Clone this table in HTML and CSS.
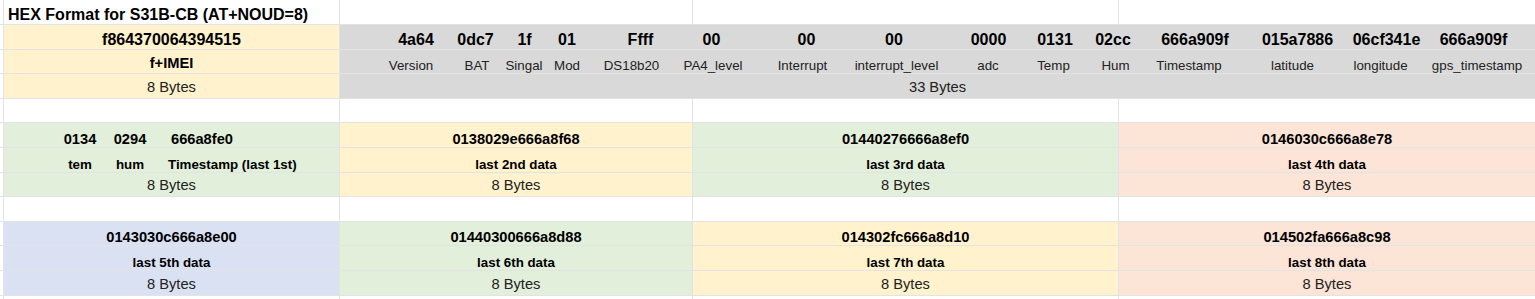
FILE: index.html
```html
<!DOCTYPE html>
<html lang="en">
<head>
<meta charset="utf-8">
<title>HEX Format for S31B-CB</title>
<link rel="stylesheet" href="styles.css">
</head>
<body>
<div class="sheet">
  <div class="c stub"></div>
  <div class="c title">HEX Format for S31B-CB (AT+NOUD=8)</div>
  <div class="c"></div>
  <div class="c"></div>
  <div class="c end"></div>

  <div class="c stub"></div>
  <div class="c yellow big">f864370064394515</div>
  <div class="c gray span3 fields-cell vals-cell">
    <div class="fields vals">
      <span>4a64</span><span>0dc7</span><span>1f</span><span>01</span><span>Ffff</span><span>00</span><span>00</span><span>00</span><span>0000</span><span>0131</span><span>02cc</span><span>666a909f</span><span>015a7886</span><span>06cf341e</span><span>666a909f</span>
    </div>
  </div>

  <div class="c stub"></div>
  <div class="c yellow mid imei">f+IMEI</div>
  <div class="c gray span3 fields-cell names-cell">
    <div class="fields names">
      <span>Version</span><span>BAT</span><span>Singal</span><span>Mod</span><span>DS18b20</span><span>PA4_level</span><span>Interrupt</span><span>interrupt_level</span><span>adc</span><span>Temp</span><span>Hum</span><span>Timestamp</span><span>latitude</span><span>longitude</span><span>gps_timestamp</span>
    </div>
  </div>

  <div class="c stub"></div>
  <div class="c yellow bytes">8 Bytes</div>
  <div class="c gray span3 bytes">33 Bytes</div>

  <div class="c stub"></div>
  <div class="c"></div>
  <div class="c"></div>
  <div class="c"></div>
  <div class="c end"></div>

  <div class="c stub"></div>
  <div class="c green split">
    <div class="sub mid">
      <span>0134</span><span>0294</span><span class="ts">666a8fe0</span>
    </div>
  </div>
  <div class="c yellow mid">0138029e666a8f68</div>
  <div class="c green mid">01440276666a8ef0</div>
  <div class="c peach mid end">0146030c666a8e78</div>

  <div class="c stub"></div>
  <div class="c green split">
    <div class="sub name">
      <span>tem</span><span>hum</span><span class="ts ts-name">Timestamp (last 1st)</span>
    </div>
  </div>
  <div class="c yellow name">last 2nd data</div>
  <div class="c green name">last 3rd data</div>
  <div class="c peach name end">last 4th data</div>

  <div class="c stub"></div>
  <div class="c green bytes">8 Bytes</div>
  <div class="c yellow bytes">8 Bytes</div>
  <div class="c green bytes">8 Bytes</div>
  <div class="c peach bytes end">8 Bytes</div>

  <div class="c stub"></div>
  <div class="c"></div>
  <div class="c"></div>
  <div class="c"></div>
  <div class="c end"></div>

  <div class="c stub"></div>
  <div class="c blue mid">0143030c666a8e00</div>
  <div class="c green mid">01440300666a8d88</div>
  <div class="c yellow mid">014302fc666a8d10</div>
  <div class="c peach mid end">014502fa666a8c98</div>

  <div class="c stub"></div>
  <div class="c blue name">last 5th data</div>
  <div class="c green name">last 6th data</div>
  <div class="c yellow name">last 7th data</div>
  <div class="c peach name end">last 8th data</div>

  <div class="c stub"></div>
  <div class="c blue bytes">8 Bytes</div>
  <div class="c green bytes">8 Bytes</div>
  <div class="c yellow bytes">8 Bytes</div>
  <div class="c peach bytes end">8 Bytes</div>

  <div class="c stub tail"></div>
  <div class="c tail"></div>
  <div class="c tail"></div>
  <div class="c tail"></div>
  <div class="c end tail"></div>
</div>
</body>
</html>
```

FILE: styles.css
```css
html, body {
  margin: 0;
  height: 299px;
  overflow: hidden;
  background: #ffffff;
}

body {
  font-family: "Liberation Sans", Arial, sans-serif;
  color: #000000;
}

.sheet {
  display: grid;
  grid-template-columns: 4px 336px 353px 426px 416px;
  grid-template-rows: 25px repeat(11, 24.6px) 3.4px;
}

.c {
  box-sizing: border-box;
  border-right: 1px solid #e2e3e3;
  border-bottom: 1px solid #e2e3e3;
  display: flex;
  align-items: flex-end;
  justify-content: center;
  padding-bottom: 0;
  white-space: nowrap;
  overflow: hidden;
  min-width: 0;
  line-height: normal;
}

.c.end {
  border-right: none;
}

.c.tail {
  border-bottom: none;
}

.span3 {
  grid-column: span 3;
  border-right: none;
}

/* fills */
.yellow { background: #fff2cc; }
.gray   { background: #d9d9d9; }
.green  { background: #e2efda; }
.peach  { background: #fce4d6; }
.blue   { background: #d9e1f2; }

/* text styles */
.title {
  justify-content: flex-start;
  padding-left: 4px;
  font-size: 16px;
  font-weight: bold;
}

.big {
  font-size: 16px;
  font-weight: bold;
}

.mid {
  font-size: 14.67px;
  font-weight: bold;
}

.imei {
  padding-bottom: 2px;
}

.name {
  font-size: 13.33px;
  font-weight: bold;
}

.bytes {
  font-size: 14.67px;
  color: #222222;
  padding-bottom: 3px;
}

/* gray field table */
.fields-cell {
  justify-content: flex-start;
}

.vals-cell {
  padding-left: 63px;
}

.names-cell {
  padding-left: 40px;
}

.fields {
  display: grid;
}

.fields span {
  justify-self: center;
  white-space: nowrap;
}

.vals {
  grid-template-columns: 26px 93px 5px 80px 67px 75px 115px 60px 129px 4px 112px 52px 153px 25px 149px;
  font-size: 16px;
  font-weight: bold;
}

.names {
  grid-template-columns: 62px 70px 24px 62px 67px 96px 83px 105px 78px 53px 71px 76px 131px 45px 148px;
  font-size: 13.33px;
  color: #222222;
}

/* first block of the history rows */
.split {
  justify-content: flex-start;
  padding-left: 51px;
}

.sub {
  display: grid;
  grid-template-columns: 50px 50px auto;
}

.sub span {
  justify-self: center;
}

.sub .ts {
  justify-self: start;
  padding-left: 16px;
}

.sub .ts-name {
  padding-left: 13px;
}
```
